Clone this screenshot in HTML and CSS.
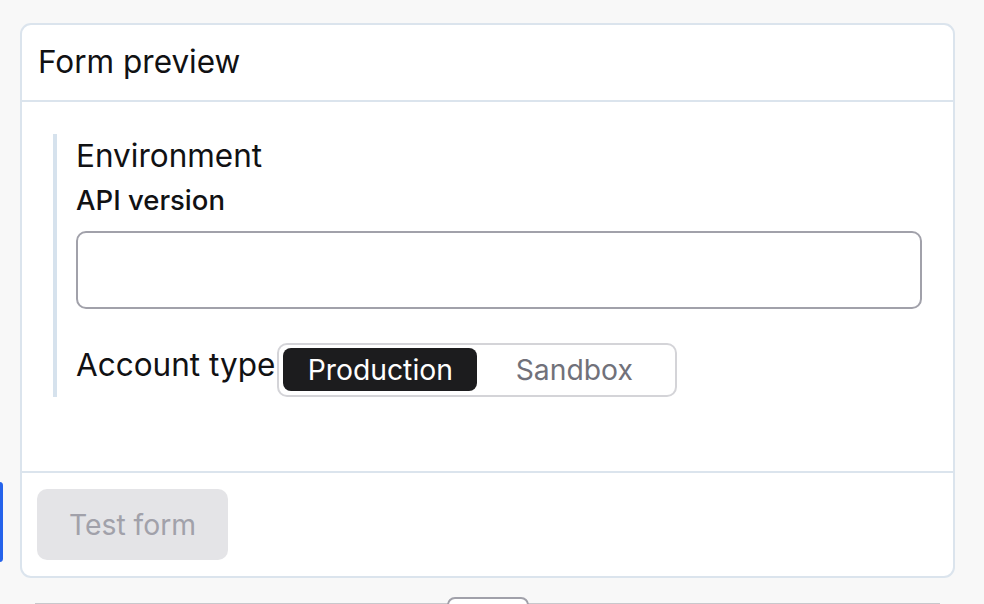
FILE: index.html
```html
<!DOCTYPE html>
<html lang="en">
<head>
<meta charset="utf-8">
<title>Form preview</title>
<link rel="stylesheet" href="styles.css">
</head>
<body>
<div class="page">
  <div class="rail-tab"></div>
  <section class="card">
    <header class="card-head">Form preview</header>
    <div class="card-body">
      <div class="group">
        <div class="group-title">Environment</div>
        <label class="field-label" for="api">API version</label>
        <input class="text-input" id="api" type="text">
        <div class="choice-row">
          <span class="choice-label">Account type</span>
          <div class="segmented">
            <button class="seg seg-active" type="button">Production</button>
            <button class="seg" type="button">Sandbox</button>
          </div>
        </div>
      </div>
    </div>
    <footer class="card-foot">
      <button class="btn-test" type="button" disabled>Test form</button>
    </footer>
  </section>
  <div class="next-bar"><div class="next-tab"></div></div>
</div>
</body>
</html>
```

FILE: styles.css
```css
* { box-sizing: border-box; }
html, body { margin: 0; height: 100%; }
body {
  background: #f8f8f8;
  font-family: "Inter", "Noto Sans", "Liberation Sans", sans-serif;
  color: #111113;
  overflow: hidden;
}
.page {
  position: relative;
  padding: 23px 29px 0 20px;
}
.rail-tab {
  position: absolute;
  left: -4px;
  top: 482px;
  width: 7px;
  height: 80px;
  border-radius: 4px;
  background: #2563eb;
}
.card {
  background: #fff;
  border: 2px solid #dbe4ed;
  border-radius: 11px;
  height: 555px;
  display: flex;
  flex-direction: column;
}
.card-head {
  height: 77px;
  padding: 0 16px 2px;
  display: flex;
  align-items: center;
  font-size: 31.5px;
  border-bottom: 2px solid #dbe4ed;
}
.card-body {
  flex: 1;
  padding: 32px 31px 0 31px;
}
.group {
  border-left: 4px solid #d6e2ed;
  padding-left: 19px;
  display: flex;
  flex-direction: column;
}
.group-title {
  font-size: 31.5px;
  line-height: 38px;
  margin-top: 3px;
}
.field-label {
  font-size: 27.5px;
  font-weight: 500;
  line-height: 34px;
  margin-top: 8px;
}
.text-input {
  margin-top: 14px;
  height: 78px;
  border: 2px solid #a1a1aa;
  border-radius: 10px;
  background: #fff;
  font: inherit;
}
.choice-row {
  margin-top: 34px;
  display: flex;
  align-items: center;
}
.choice-label {
  font-size: 31.5px;
  line-height: 38px;
  margin-bottom: 10px;
}
.segmented {
  margin-left: 2px;
  width: 400px;
  height: 54px;
  padding: 3px 4px 4px;
  border: 2px solid #d4d4d8;
  border-radius: 10px;
  display: flex;
}
.seg {
  flex: 1;
  border: 0;
  background: transparent;
  border-radius: 8px;
  font-family: inherit;
  font-size: 28.3px;
  color: #71717a;
  padding: 0;
}
.seg-active {
  background: #1c1c1e;
  color: #fff;
}
.card-foot {
  height: 105px;
  border-top: 2px solid #dbe4ed;
  padding: 16px 15px;
}
.btn-test {
  width: 191px;
  height: 71px;
  border: 0;
  border-radius: 10px;
  background: #e4e4e7;
  color: #a1a1aa;
  font-family: inherit;
  font-size: 28.3px;
  padding: 0;
}
.next-bar {
  margin: 19px 15px 0;
  height: 30px;
  background: linear-gradient(#c8c8cc, #c8c8cc) no-repeat 0 6px / 100% 2px;
}
.next-tab {
  width: 82px;
  height: 30px;
  margin: 0 auto;
  background: #fff;
  border: 2px solid #a1a1aa;
  border-radius: 8px;
}
```
